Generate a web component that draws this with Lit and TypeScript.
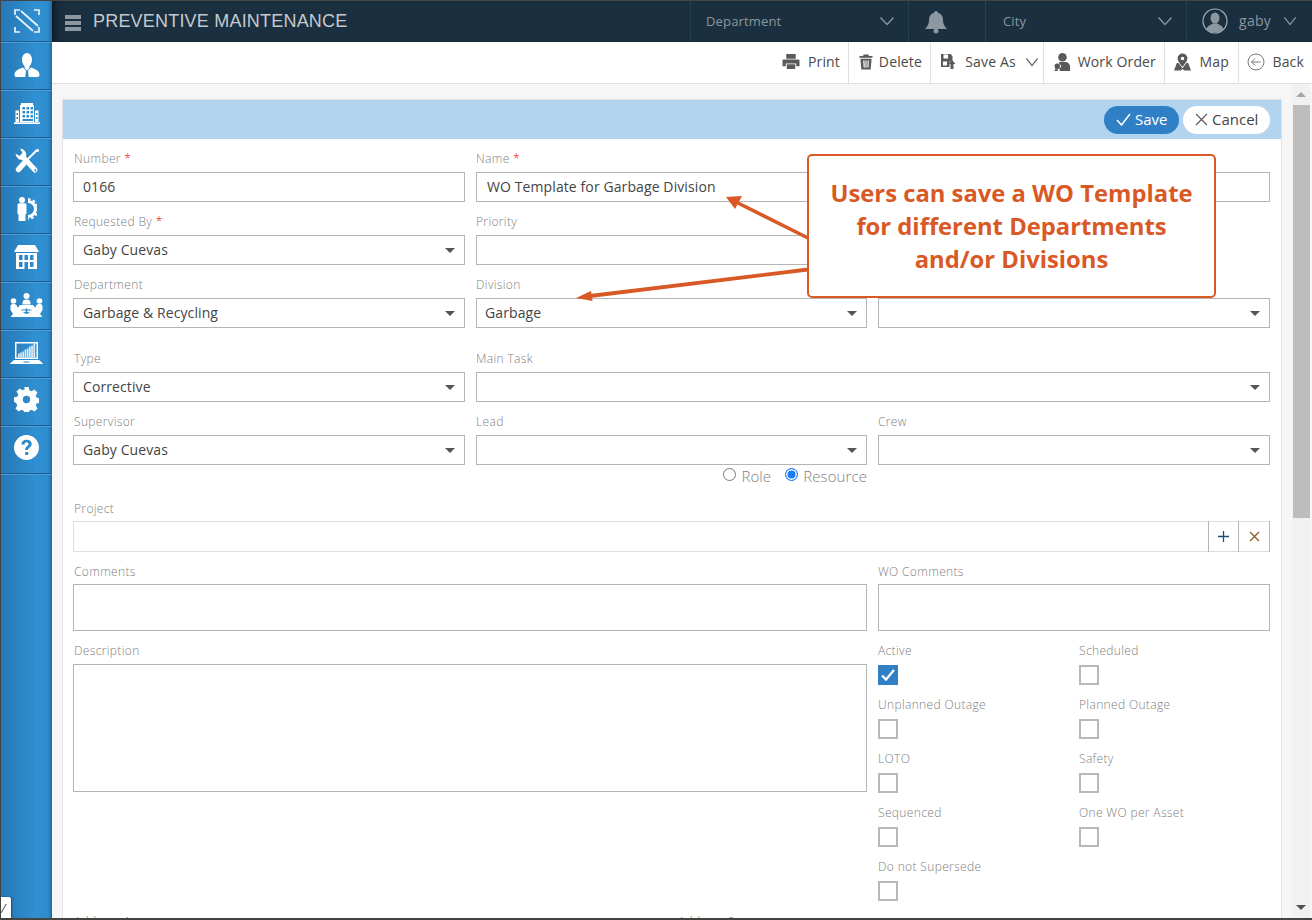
import { LitElement, html, css, svg } from "lit";
import { customElement } from "lit/decorators.js";

const BG = "#2f87c8";
const chev = (w = 16) => html`<svg class="chev" width="${w}" height="10" viewBox="0 0 16 10" preserveAspectRatio="none"><path d="M1.5 1.5 8 8.5l6.500-7" fill="none" stroke="currentColor" stroke-width="1.300"/></svg>`;

const bars = [4, 5, 6, 8, 9, 11, 12, 14];

const sideIcons: { w: number; h: number; p: unknown }[] = [
  {
    w: 26, h: 24,
    p: svg`<path d="M8 6.500C8 3 10.200 0 13 0s5 3 5 6.500c0 3-1.300 5.500-2.800 7l.3 1.500L13 18l-2.500-3 .3-1.500C9.300 12 8 9.500 8 6.500z"/>
      <path d="M0.500 22c0-4 3-5.500 8.500-7.500L13 19l4-4.500c5.500 2 8.500 3.500 8.500 7.500 0 1.300-.7 2-2 2h-21c-1.300 0-2-.7-2-2z"/>
      <path d="M12 17.500h2l.7 6.500h-3.400z" fill="${BG}"/>`,
  },
  {
    w: 26, h: 21,
    p: svg`<path fill-rule="evenodd" d="M7 0h12v2h1v17H6V2h1zM8.500 4v2.500H11V4zm4 0v2.500H15V4zm4 0v2.500H19V4zm-8 4v2.500H11V8zm4 0v2.500H15V8zm4 0v2.500H19V8zm-8 4v2.500H11V12zm4 0v2.500H15V12zm4 0v2.500H19V12zm-8 4v2h10.500v-2z"/>
      <path fill-rule="evenodd" d="M1.500 7.500H5V19H1.500zM2.500 10v2h1.500v-2zm0 4v2h1.500v-2zM21 7.500h3.500V19H21zM22 10v2h1.500v-2zm0 4v2h1.500v-2z"/><path d="M0 19.300h26V21H0z"/>`,
  },
  {
    w: 24, h: 26,
    p: svg`<path d="M22.500 1.500 12 12" fill="none" stroke="#fff" stroke-width="2"/><path d="M23.500 .5l.5 3-2 .5-1-1z"/>
      <path d="M10.500 13.500 3.500 21.500" fill="none" stroke="#fff" stroke-width="5.500" stroke-linecap="round"/>
      <path d="M8 9 20 22" fill="none" stroke="#fff" stroke-width="5" stroke-linecap="round"/>
      <path d="M5 .5a6.500 6.500 0 0 1 6 8.500L9 11.500a6.500 6.500 0 0 1-8.500-6L4.500 8l3-3z"/>
      <circle cx="20.300" cy="22.300" r="1.100" fill="${BG}"/>`,
  },
  {
    w: 20, h: 24,
    p: svg`<circle cx="5" cy="3" r="3"/><path d="M.5 8c0-1 .8-1.700 1.700-1.700H8c1 0 1.500.7 1.500 1.700v9H8.500v7h-7v-7H.5z"/>
      <path d="M11 4.500a7.500 7.500 0 0 1 0 15" fill="none" stroke="#fff" stroke-width="3"/>
      <path d="M11 2.500a9.500 9.500 0 0 1 0 19" fill="none" stroke="#fff" stroke-width="2.600" stroke-dasharray="2.500 2.300"/>`,
  },
  {
    w: 25, h: 24,
    p: svg`<path d="M4 0h17l4 7H0z"/>
      <path fill-rule="evenodd" d="M2 8h21v16H2zM5 10v5h3.500v-5zm5.500 0v5H14v-5zm5.500 0v5h3.500v-5zM5 17v5h3.500v-5zm5.500 0v7H14v-7zm5.500 0v5h3.500v-5z"/>`,
  },
  {
    w: 33, h: 24,
    p: svg`<circle cx="16.500" cy="3" r="3"/><circle cx="3.500" cy="8" r="2.800"/><circle cx="29.500" cy="8" r="2.800"/>
      <path d="M12.500 10c0-2.500 1.700-3.500 4-3.500s4 1 4 3.500v1.500h-8zM.5 17v-4c0-1.500 1.500-2 3-2s3 .5 3.500 2l1 2.500L3 21zM32.500 17v-4c0-1.500-1.500-2-3-2s-3 .5-3.500 2l-1 2.500L30 21z"/>
      <path fill-rule="evenodd" d="M10 12h13l9.500 12H.5zM11.500 16.500v1h4.200v1.500l-3.200.5 4 1.500 4-1.500-3.200-.5v-1.500h4.200v-1h-4.200v-1h-1.600v1z"/>`,
  },
  {
    w: 33, h: 22,
    p: svg`<path fill-rule="evenodd" d="M5 0h23v17H5zM6.500 1.500v14h20v-14z"/>
      ${bars.map((h, i) => svg`<rect x="${8 + i * 2.2}" y="${15.500 - h}" width="1.700" height="${h}" opacity=".85"/>`)}
      <path d="M4 18h25l3.500 3c.4.5.2 1-.5 1H1c-.7 0-.9-.5-.5-1z"/><path d="M13.500 19.500h6v1h-6z" fill="${BG}"/>`,
  },
  {
    w: 25, h: 25,
    p: svg`<path fill-rule="evenodd" d="M10.300 0h4.400l.6 3.300 2.300 1 2.800-1.800 3.100 3.100-1.800 2.800 1 2.300 3.300.6v4.400l-3.300.6-1 2.300 1.800 2.800-3.100 3.100-2.800-1.800-2.300 1-.6 3.300h-4.400l-.6-3.300-2.300-1-2.800 1.800-3.100-3.100 1.800-2.800-1-2.300L0 14.700v-4.400l3.300-.6 1-2.300-1.800-2.800 3.100-3.100 2.800 1.800 2.300-1zM12.500 8.800a3.700 3.700 0 1 0 0 7.400 3.700 3.700 0 0 0 0-7.400z"/>`,
  },
  {
    w: 25, h: 25,
    p: svg`<path fill-rule="evenodd" d="M12.500 0a12.500 12.500 0 1 1 0 25 12.500 12.500 0 0 1 0-25zM7.500 9.500h3c0-1.500.8-2.200 2-2.200s2 .8 2 1.800c0 2.100-3.300 2.400-3.300 6h2.800c0-2.600 3.700-2.900 3.700-6.200 0-2.700-2.300-4.200-5.200-4.200S7.500 6.600 7.500 9.500zM11.200 17v3h3v-3z"/>`,
  },
];

const field = (label: string, value: string, kind: "input" | "select" = "select", req = false, first = false) => html`
  <div class="field ${first ? "c1" : ""}">
    <label class="lb">${label}${req ? html` <span class="req">*</span>` : ""}</label>
    <div class="box ${kind}">
      <span>${value}</span>
      ${kind === "select" ? html`<i class="caret"></i>` : ""}
    </div>
  </div>`;

const check = (label: string, on = false) => html`
  <div class="ck">
    <label>${label}</label>
    <div class="cb ${on ? "on" : ""}">
      ${on ? html`<svg width="20" height="20" viewBox="0 0 20 20"><path d="M4 10.500l4 4 8-9.500" fill="none" stroke="#fff" stroke-width="2.200"/></svg>` : ""}
    </div>
  </div>`;

@customElement("app-root")
export class AppRoot extends LitElement {
  static styles = css`
    :host { display: block; width: 1312px; height: 920px; overflow: hidden; font-family: "Open Sans", sans-serif; color: #333; background: #fff; }
    * { box-sizing: border-box; }
    .frame { position: relative; width: 100%; height: 100%; display: flex; border: 1px solid #444; border-right: 0; border-bottom-width: 2px; }
    .side { width: 51px; flex: none; background: linear-gradient(90deg, #2678b6 0%, #3090d2 70%, #2e8ccc 92%, #25699d 100%); display: flex; flex-direction: column; position: relative; }
    .side .it { height: 48px; flex: none; display: flex; align-items: center; justify-content: center; border-bottom: 1px solid #1f5f8e; box-shadow: 0 1px 0 #4a9dd6; padding-bottom: 1px; }
    .side .it.logo { height: 41px; padding-bottom: 0; }
    .side .it:nth-child(9), .side .it:nth-child(10) { padding-bottom: 4px; }
    .side svg { fill: #fff; display: block; }
    .tip { position: absolute; left: 0; bottom: 0; width: 10px; height: 21px; background: #fff; border-radius: 0 2px 0 0; box-shadow: 1px 0 2px #0006; font-size: 13px; line-height: 22px; color: #555; font-style: italic; overflow: hidden; }
    .main { flex: 1; min-width: 0; display: flex; flex-direction: column; }
    .top { height: 41px; flex: none; background: #1a2f3f; display: flex; align-items: stretch; color: #8c979f; box-shadow: inset 8px 0 8px -6px #0a151d; }
    .burger { display: flex; flex-direction: column; gap: 2px; margin: 14px 0 0 13px; width: 16px; height: 16px; flex: none; }
    .burger i { display: block; height: 4px; background: #8c979f; }
    .title { font-family: "Liberation Sans", sans-serif; font-size: 18px; letter-spacing: .2px; color: #c4c9cd; margin-left: 12px; line-height: 41px; width: 597px; white-space: nowrap; flex: none; }
    .tc { display: flex; align-items: center; border-left: 1px solid #25404f; font-size: 13px; letter-spacing: .15px; position: relative; padding-bottom: 2px; }
    .dept { width: 218px; padding: 0 13px 1px 15px; justify-content: space-between; }
    .bell { width: 77px; justify-content: center; padding-right: 22px; padding-bottom: 0; }
    .city { width: 201px; padding: 0 13px 2px 17px; justify-content: space-between; }
    .user { flex: 1; padding-left: 15px; gap: 11px; font-size: 14px; letter-spacing: .3px; }
    .user .chev { margin-left: 1px; }
    .bar { height: 42px; flex: none; background: #fff; border-bottom: 1px solid #e0e0e0; display: flex; justify-content: flex-end; align-items: stretch; font-size: 14px; letter-spacing: .15px; color: #4a4a4a; }
    .tb { display: flex; align-items: center; border-left: 1px solid #e0e0e0; white-space: nowrap; padding: 0 0 2px 0; justify-content: space-between; }
    .tb svg { fill: #5a5a5a; display: block; flex: none; }
    .tb svg.chev { fill: none; color: #666; }
    .t-print { border-left: 0; gap: 8px; padding-right: 8px; }
    .t-del { width: 82px; padding-left: 10px; padding-right: 8px; }
    .t-save { width: 113px; padding-left: 10px; padding-right: 4px; }
    .t-wo { width: 121px; padding-left: 9px; padding-right: 8px; }
    .t-map { width: 74px; padding-left: 9px; padding-right: 9px; }
    .t-back { width: 74px; padding-left: 8px; padding-right: 8px; }
    .content { flex: 1; min-height: 0; background: #f6f6f6; display: flex; padding: 15px 2px 0 10px; overflow: hidden; }
    .card { width: 1220px; flex: none; height: 840px; background: #fff; border: 1px solid #e3e3e3; border-bottom: 0; overflow: hidden; }
    .head { height: 39px; background: #b3d4ef; display: flex; justify-content: flex-end; align-items: center; padding: 0 11px 0 0; gap: 4px; }
    .btn { height: 28px; border-radius: 14px; display: flex; align-items: center; font-size: 15px; gap: 4px; padding: 0 0 2px 12px; }
    .btn svg { margin-top: 2px; }
    .btn.save { background: #3080c6; color: #fff; width: 75px; }
    .btn.cancel { background: #fff; color: #444; width: 87px; gap: 4px; }
    .form { padding: 11px 10px 0 10px; display: grid; grid-template-columns: 392px 391px 392px; column-gap: 11px; }
    .field { display: flex; flex-direction: column; margin-bottom: 11px; min-width: 0; }
    label { font-size: 12px; color: #808080; font-weight: 300; letter-spacing: .35px; line-height: 17px; height: 21px; display: block; white-space: nowrap; }
    label.lb { height: 22px; }
    .c1 label { padding-left: 1px; }
    .req { color: #e11; }
    .box { height: 30px; border: 1px solid #b5b5b5; background: #fff; display: flex; align-items: center; justify-content: space-between; font-size: 14px; letter-spacing: .1px; color: #444; padding: 0 9px 2px; position: relative; white-space: nowrap; }
    .box.input { padding: 0 10px 2px; }
    .num .box.input { padding-left: 9px; }
    .tight .box { padding-left: 8px; }
    .caret { width: 0; height: 0; border: 5px solid transparent; border-top: 5px solid #555; border-bottom: 0; margin-top: 2px; }
    .gap { grid-column: 1 / -1; height: 11px; }
    .span2 { grid-column: span 2; }
    .radios { grid-column: 2; display: flex; justify-content: flex-end; align-items: center; gap: 14px; font-size: 15px; letter-spacing: .1px; font-weight: 300; color: #808080; height: 21px; margin-top: -11px; line-height: 22px; }
    .radios span { display: flex; align-items: center; gap: 5px; }
    .radio { width: 13px; height: 13px; border-radius: 50%; border: 1px solid #777; background: #fff; display: block; position: relative; margin-top: -3px; }
    .radio.on { border: 1.500px solid #1a7cf0; box-shadow: inset 0 0 0 1.500px #fff; background: #1a7cf0; }
    .rowgap { grid-column: 1 / -1; height: 14px; }
    .project { grid-column: 1 / -1; margin-bottom: 11px; }
    .pbox { height: 31px; border: 1px solid #dedede; background: #fff; display: flex; justify-content: flex-end; }
    .pbtn { width: 30px; margin: -1px 0; border-left: 1px solid #b5b5b5; display: flex; align-items: center; justify-content: center; }
    .pbtn:last-child { width: 32px; border-right: 1px solid #b5b5b5; margin-right: -1px; }
    .ta { height: 47px; }
    .ta2 { height: 128px; }
    .ckgrid { display: grid; grid-template-columns: 201px 191px; row-gap: 0; }
    .ck { height: 54px; }
    .ck label { height: 21px; }
    .cb { width: 20px; height: 20px; border: 2px solid #b8b8b8; background: #fff; margin-top: 2px; }
    .cb.on { background: #3080c6; border: 0; }
    .addr { grid-column: 1 / -1; display: grid; grid-template-columns: 604px 1fr; margin-top: 1px; }
    .over { position: absolute; inset: 0; pointer-events: none; }
    .callout { position: absolute; left: 806px; top: 153px; width: 409px; height: 144px; background: #fff; border: 2px solid #d95926; border-radius: 5px; color: #d95926; font-weight: 700; font-size: 23.800px; line-height: 33px; text-align: center; display: flex; align-items: center; justify-content: center; }
    .arrows { position: absolute; inset: 0; }
    .sb { width: 18px; flex: none; margin-left: 10px; background: #f1f1f1; position: relative; margin-top: -15px; display: flex; flex-direction: column; align-items: center; }
    .sb .a { height: 21px; flex: none; display: flex; align-items: center; justify-content: center; }
    .sb .t { width: 17px; height: 413px; background: #bdbdbd; flex: none; }
    .sb .f { flex: 1; }
    .tri-u { width: 0; height: 0; border: 5px solid transparent; border-bottom: 5px solid #a5a5a5; border-top: 0; }
    .tri-d { width: 0; height: 0; border: 5px solid transparent; border-top: 5px solid #505050; border-bottom: 0; }
  `;

  render() {
    return html`
      <div class="frame">
        <nav class="side">
          <div class="it logo">
            <svg width="26" height="24" viewBox="0 0 26 24"><path d="M6 1H1v5M20 1h5v5M1 18v5h5M25 18v5h-5M7 2l17 15M2 7l17 15" fill="none" stroke="#e8f3fb" stroke-width="1.700"/></svg>
          </div>
          ${sideIcons.map((c) => html`<div class="it"><svg width="${c.w}" height="${c.h}" viewBox="0 0 ${c.w} ${c.h}">${c.p}</svg></div>`)}
          <div class="tip">/</div>
        </nav>
        <div class="main">
          <header class="top">
            <div class="burger"><i></i><i></i><i></i></div>
            <div class="title">PREVENTIVE MAINTENANCE</div>
            <div class="tc dept"><span>Department</span>${chev()}</div>
            <div class="tc bell"><svg width="24" height="24" viewBox="0 0 24 24" fill="#8c979f"><path d="M12 1c1.300 0 2 .8 2 1.700 3.500 1 5 3.800 5 7.300 0 4 1.500 6.500 4 9H1c2.500-2.500 4-5 4-9 0-3.500 1.500-6.300 5-7.300C10 1.800 10.700 1 12 1z"/><circle cx="12" cy="21" r="2.500"/></svg></div>
            <div class="tc city"><span>City</span>${chev()}</div>
            <div class="tc user">
              <svg width="26" height="26" viewBox="0 0 26 26"><circle cx="13" cy="13" r="12" fill="none" stroke="#a3acb2" stroke-width="1.200"/><ellipse cx="13" cy="10" rx="4.500" ry="5.500" fill="#8c979f"/><path d="M4.500 21c1-4 5-4 6-5.500h5c1 1.500 5 1.500 6 5.500a12 12 0 0 1-17 0z" fill="#8c979f"/></svg>
              <span>gaby</span>${chev(14)}
            </div>
          </header>
          <div class="bar">
            <div class="tb t-print"><svg width="18" height="17" viewBox="0 0 19 18"><path d="M4.500 1h10v5h-10zM1.500 7h16a1 1 0 0 1 1 1v6h-3.500v-3H4v3H.5V8a1 1 0 0 1 1-1zM5 12h9v5H5z"/></svg><span>Print</span></div>
            <div class="tb t-del"><svg width="14" height="18" viewBox="0 0 15 18"><path fill-rule="evenodd" d="M5 1h5l.6 1.500H14.500V4.500H.5V2.500H4.400zM1.500 5.500h12L12.500 17h-10zM4.500 7.500 5 15h1.200l-.3-7.500zm2.400 0V15h1.200V7.500zm2.400 0L9 15h1.200l.3-7.500z"/></svg><span>Delete</span></div>
            <div class="tb t-save"><svg width="15" height="17" viewBox="0 0 15 17"><path fill-rule="evenodd" d="M0 1h9.500l2 2v5.500h-3V14H0zM2.500 1.500v4H7v-4zM2 8.500v4h4v-4z"/><path d="M11 7l3.500 4H12.500v5h-3v-5H7.500z"/></svg><span>Save As</span>${chev(14)}</div>
            <div class="tb t-wo"><svg width="18" height="20" viewBox="0 0 19 20"><circle cx="10" cy="5" r="4.500"/><path d="M6.500 10h7c3 .5 4.500 2.500 4.500 5v4.500H6.500c1-1 1-2 0-3 1.500 0 2-1 2-2s-1-2-2-2z"/><path d="M1.500 14a3 3 0 1 1 3 3.600h-2zM1.700 18h3.500v1.500H1.700z"/></svg><span>Work Order</span></div>
            <div class="tb t-map"><svg width="17" height="20" viewBox="0 0 18 20"><path fill-rule="evenodd" d="M9 1a5.200 5.200 0 0 1 5.200 5.200C14.200 9 11 12.500 9 15 7 12.500 3.800 9 3.800 6.200A5.200 5.200 0 0 1 9 1zm0 3.500a1.800 1.800 0 1 0 0 3.600 1.800 1.800 0 0 0 0-3.600z"/><path d="M3 11h1.800L9 16.500 13.200 11H15l3 8H11l-2-1.500L7 19H0z"/></svg><span>Map</span></div>
            <div class="tb t-back"><svg width="18" height="18" viewBox="0 0 18 18"><circle cx="9" cy="9" r="8" fill="none" stroke="#777"/><path d="M13.500 9h-9M8 5.500 4.500 9 8 12.500" fill="none" stroke="#777"/></svg><span>Back</span></div>
          </div>
          <div class="content">
            <section class="card">
              <div class="head">
                <div class="btn save"><svg width="15" height="13" viewBox="0 0 15 13"><path d="M1 7l4.500 5L14 1" fill="none" stroke="#fff" stroke-width="1.500"/></svg>Save</div>
                <div class="btn cancel"><svg width="13" height="13" viewBox="0 0 13 13"><path d="M1 1l11 11M12 1 1 12" fill="none" stroke="#555" stroke-width="1.100"/></svg>Cancel</div>
              </div>
              <div class="form">
                <div class="num">${field("Number", "0166", "input", true, true)}</div>
                ${field("Name", "WO Template for Garbage Division", "input", true)}
                ${field("", "", "input")}
                ${field("Requested By", "Gaby Cuevas", "select", true, true)}
                ${field("Priority", "", "select")}
                <div></div>
                ${field("Department", "Garbage & Recycling", "select", false, true)}
                <div class="tight">${field("Division", "Garbage")}</div>
                ${field("", "")}
                <div class="gap"></div>
                ${field("Type", "Corrective", "select", false, true)}
                <div class="span2">${field("Main Task", "")}</div>
                ${field("Supervisor", "Gaby Cuevas", "select", false, true)}
                ${field("Lead", "")}
                ${field("Crew", "")}
                <div class="radios"><span><i class="radio"></i>Role</span><span><i class="radio on"></i>Resource</span></div>
                <div class="rowgap"></div>
                <div class="project c1">
                  <label>Project</label>
                  <div class="pbox">
                    <div class="pbtn"><svg width="13" height="13" viewBox="0 0 13 13"><path d="M6.500 1v11M1 6.500h11" fill="none" stroke="#1f4d6b" stroke-width="1.300"/></svg></div>
                    <div class="pbtn"><svg width="11" height="11" viewBox="0 0 11 11"><path d="M1 1l9 9M10 1l-9 9" fill="none" stroke="#8a5a20" stroke-width="1.200"/></svg></div>
                  </div>
                </div>
                <div class="field span2 c1"><label>Comments</label><div class="box ta"></div></div>
                <div class="field"><label>WO Comments</label><div class="box ta"></div></div>
                <div class="span2"><div class="field c1"><label class="lb">Description</label><div class="box ta2"></div></div></div>
                <div class="ckgrid">
                  ${check("Active", true)}${check("Scheduled")}
                  ${check("Unplanned Outage")}${check("Planned Outage")}
                  ${check("LOTO")}${check("Safety")}
                  ${check("Sequenced")}${check("One WO per Asset")}
                  ${check("Do not Supersede")}
                </div>
                <div class="addr c1"><label>Address 1</label><label>Address 2</label></div>
              </div>
            </section>
            <aside class="sb">
              <div class="a"><i class="tri-u"></i></div>
              <div class="t"></div>
              <div class="f"></div>
              <div class="a"><i class="tri-d"></i></div>
            </aside>
          </div>
        </div>
        <div class="over">
          <svg class="arrows" width="1311" height="918" viewBox="1 1 1311 918">
            <path d="M808 238 738 203" fill="none" stroke="#d95926" stroke-width="3.600"/>
            <path d="M726 197l16-1-7 13z" fill="#d95926"/>
            <path d="M812 269 590 296" fill="none" stroke="#d95926" stroke-width="3.800"/>
            <path d="M576 298l15-7 1.500 10z" fill="#d95926"/>
          </svg>
          <div class="callout">Users can save a WO Template<br/>for different Departments<br/>and/or Divisions</div>
        </div>
      </div>`;
  }
}
